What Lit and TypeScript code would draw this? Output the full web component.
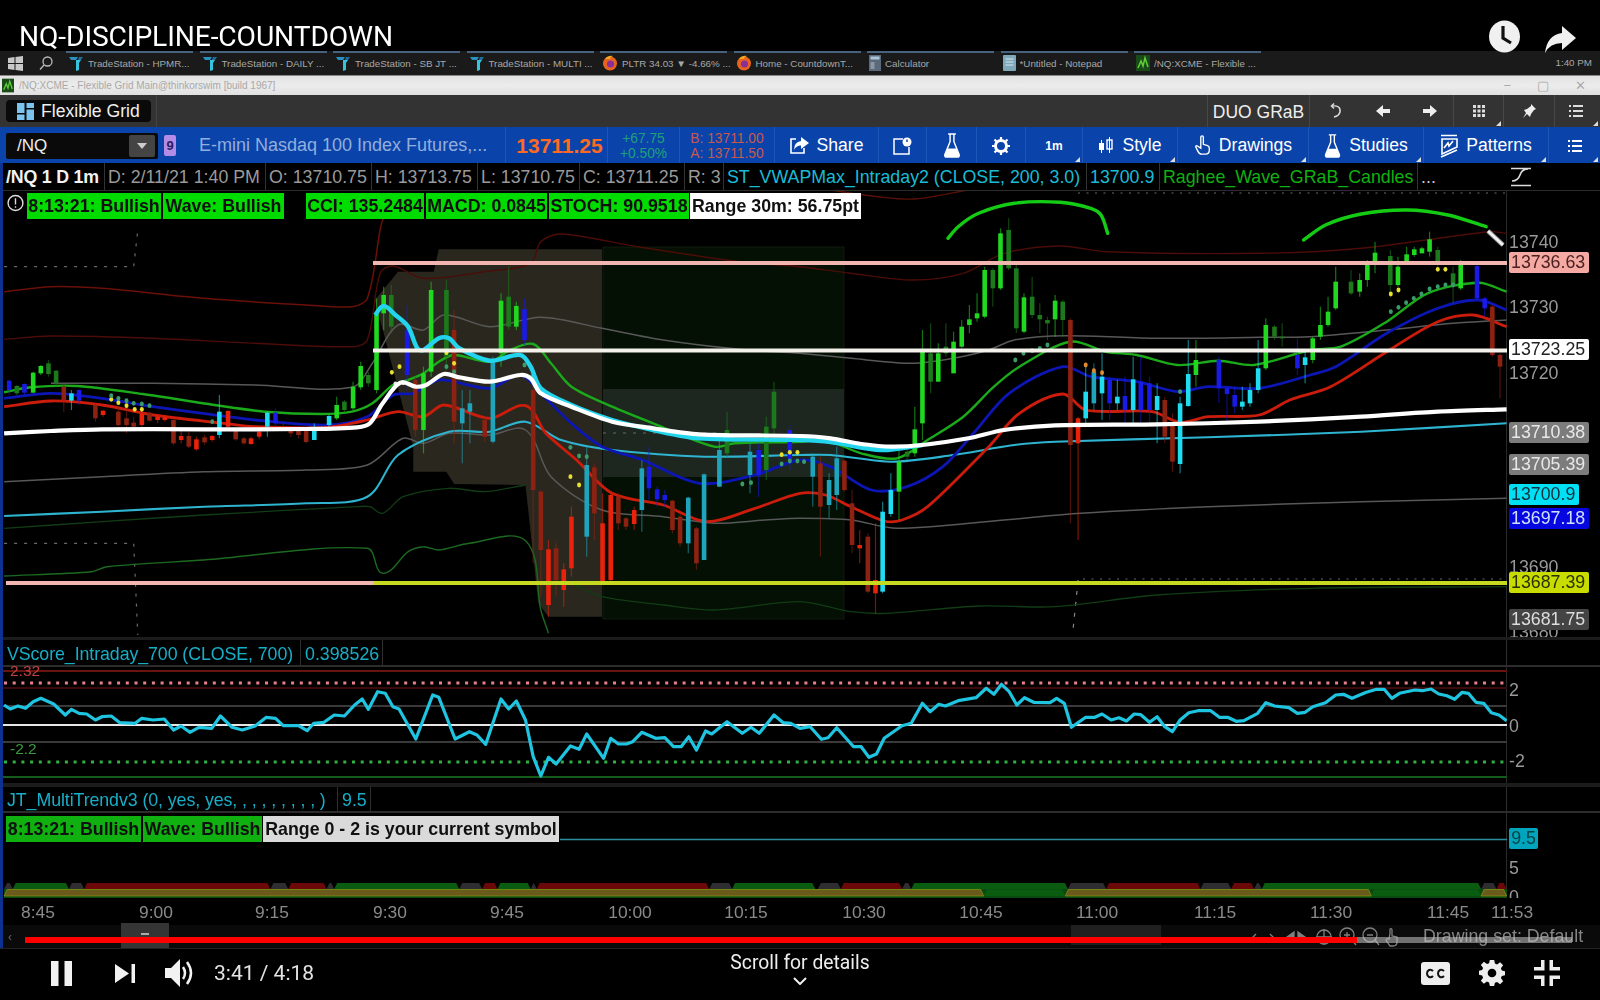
import { LitElement, html, css, svg } from "lit";
import { customElement } from "lit/decorators.js";

type Pt = [number, number];
const L = (p: Pt[]): Pt[] => p.map(([x, y]) => [x / 1.96, 230 + y / 3]);
const R = (p: Pt[]): Pt[] => p.map(([x, y]) => [800 + x / 1.96, 190 + y / 3]);
const TOP = (p: Pt[]): Pt[] => p.map(([x, y]) => [x / 1.96, y / 3]);
const V1 = (p: Pt[]): Pt[] => p.map(([x, y]) => [x / 1.96, 640 + y / 3]);
const V2 = (p: Pt[]): Pt[] => p.map(([x, y]) => [800 + x / 1.96, 640 + y / 3]);
const pts = (p: Pt[]) => p.map(([x, y]) => `${x.toFixed(1)},${y.toFixed(1)}`).join(" ");
/* Smooth curve whose tangents scale with each segment, so uneven spacing does not overshoot */
const smooth = (p: Pt[]) => {
  const tan = (i: number): Pt => {
    const a = p[Math.max(0, i - 1)], c = p[Math.min(p.length - 1, i + 1)];
    const dx = c[0] - a[0], dy = c[1] - a[1], n = Math.hypot(dx, dy) || 1;
    return [dx / n, dy / n];
  };
  let d = `M${p[0][0].toFixed(1)} ${p[0][1].toFixed(1)}`;
  for (let i = 0; i < p.length - 1; i++) {
    const b = p[i], c = p[i + 1];
    const s = Math.hypot(c[0] - b[0], c[1] - b[1]) * 0.3;
    const t1 = tan(i), t2 = tan(i + 1);
    d += `C${(b[0] + t1[0] * s).toFixed(1)} ${(b[1] + t1[1] * s).toFixed(1)} ${(c[0] - t2[0] * s).toFixed(1)} ${(c[1] - t2[1] * s).toFixed(1)} ${c[0].toFixed(1)} ${c[1].toFixed(1)}`;
  }
  return d;
};

const LINES: { c: string; w: number; p: Pt[] }[] = [
  { c: "#6a1008", w: 1.5, p: [...L([[8,185],[100,170],[200,175],[400,205],[600,225],[690,230],[720,205],[745,0]]), ...TOP([[750,660],[760,640],[790,600],[830,600]])] },
  { c: "#4c0c08", w: 1.4, p: [...L([[8,328],[100,318],[300,325],[500,340],[690,350],[720,330],[745,130],[770,108],[830,145],[950,125],[1040,100],[1060,35],[1100,12],[1250,50],[1450,95],[1568,110]]), ...R([[100,250],[220,270],[320,250],[400,190],[510,168],[600,185],[900,190],[1100,175],[1350,125],[1385,130]])] },
  { c: "#5a1008", w: 1.4, p: [[830,190],[880,197],[915,199],[968,190]] },
  { c: "#123c14", w: 1.3, p: L([[8,895],[200,875],[400,855],[700,830],[725,830],[750,850],[790,800],[880,775],[950,785],[1030,765]]) },
  { c: "#1c6a20", w: 1.4, p: L([[8,1038],[180,1025],[210,1010],[400,990],[720,955],[750,1030],[800,965],[830,950],[860,960],[920,940],[1030,932],[1060,1140],[1075,1210]]) },
  { c: "#123c14", w: 1.3, p: [...L([[1120,1060],[1180,1100],[1300,1125],[1400,1140],[1568,1115]]), ...R([[100,1265],[170,1270],[350,1248],[500,1250],[700,1215],[1000,1195],[1385,1190]])] },
  { c: "#585858", w: 1.5, p: [...L([[100,460],[300,460],[500,465],[690,472],[730,400],[780,285],[830,300],[870,255],[960,290],[1060,262],[1180,295],[1300,330],[1450,358],[1568,370]]), ...R([[100,505],[220,520],[300,505],[370,480],[420,450],[520,437],[700,445],[900,442],[1000,440],[1150,420],[1280,400],[1385,390]])] },
  { c: "#585858", w: 1.5, p: [...L([[8,755],[200,740],[400,725],[600,720],[720,705],[790,625],[830,640],[880,610],[960,615],[1030,600],[1080,740],[1180,840],[1300,860],[1400,880],[1500,870],[1568,865]]), ...R([[100,990],[190,1015],[400,990],[550,970],[800,950],[1100,935],[1385,925]])] },
  { c: "#2eb4d0", w: 2.1, p: [...L([[8,858],[200,845],[400,830],[600,820],[720,800],[780,675],[880,605],[960,605],[1030,575],[1100,630],[1200,660],[1380,680],[1568,675]]), ...R([[60,795],[180,815],[300,795],[420,765],[500,755],[800,742],[1100,725],[1385,700]])] },
  { c: "#1aaa1a", w: 2.4, p: [...L([[8,487],[60,472],[150,468],[280,492],[420,525],[520,545],[630,552],[690,545],[730,520],[770,465],[800,450],[830,430],[860,395],[890,375],[960,395],[1000,360],[1045,342],[1080,400],[1120,470],[1200,530],[1280,580],[1400,650],[1440,640],[1568,635]]), ...R([[50,750],[120,790],[190,805],[250,750],[320,680],[380,590],[430,530],[530,455],[600,485],[660,495],[740,525],[820,512],[890,525],[1000,480],[1060,470],[1150,395],[1230,310],[1330,278],[1385,305]])] },
  { c: "#0c16b4", w: 2.8, p: [...L([[8,505],[100,490],[200,505],[300,530],[500,570],[640,585],[720,560],[770,495],[810,490],[860,450],[960,475],[1020,435],[1060,490],[1120,580],[1180,650],[1260,690],[1370,760],[1480,735],[1568,690]]), ...R([[60,830],[140,900],[210,890],[280,830],[340,730],[410,610],[515,530],[570,560],[660,575],[740,605],[800,590],[900,595],[1000,555],[1050,530],[1150,430],[1250,355],[1330,330],[1385,360]])] },
  { c: "#cc1c0c", w: 2.8, p: [...L([[8,530],[100,513],[200,525],[300,555],[440,580],[500,590],[640,592],[720,570],[780,545],[830,560],[870,525],[960,565],[1030,527],[1070,610],[1130,690],[1200,790],[1300,825],[1385,875],[1480,835],[1568,790]]), ...R([[50,915],[100,950],[165,993],[200,990],[250,950],[370,770],[430,670],[515,612],[560,660],[690,665],[745,697],[800,680],[900,675],[960,630],[1040,590],[1150,485],[1250,395],[1320,375],[1385,410]])] },
];
const THICK_CYAN: Pt[] = [...L([[735,255],[752,228],[775,255],[800,290],[818,355],[830,360],[860,325],[880,325],[900,355],[960,392],[1020,375],[1040,410],[1060,475],[1120,525],[1200,570],[1280,600],[1370,625],[1568,630]]), ...R([[60,756],[160,780],[240,765]])];
const THICK_WHITE: Pt[] = [...L([[8,610],[100,603],[200,598],[400,598],[600,597],[700,592],[725,580],[750,520],[785,458],[815,470],[835,465],[870,432],[900,442],[960,455],[1020,435],[1040,445],[1060,490],[1120,530],[1200,575],[1280,595],[1370,613],[1568,618]]), ...R([[60,745],[120,762],[180,770],[240,765],[330,745],[400,720],[500,706],[700,703],[900,695],[1100,680],[1250,665],[1385,658]])];

const COL: Record<string, string> = { g: "#20d820", d: "#1c7a1c", r: "#ea220c", R: "#8e2212", b: "#1a1ae6", c: "#1fdcf0", C: "#20a4bc" };
type C = [number, number, number, number, number, string];
const CANDLES_L: C[] = [
[18,450,452,480,495,"b"],[33,465,468,490,495,"d"],[48,460,462,488,495,"b"],[65,425,428,488,490,"g"],[80,405,408,430,435,"g"],[95,390,400,432,440,"d"],[110,420,422,460,470,"d"],[125,465,470,510,545,"R"],[140,480,490,512,540,"c"],[155,478,480,512,525,"b"],[187,520,525,565,575,"R"],[202,540,542,555,560,"r"],[232,530,545,585,590,"R"],[248,540,565,585,610,"R"],[262,560,578,590,600,"R"],[278,540,552,585,590,"r"],[293,545,548,572,575,"R"],[309,555,560,570,580,"r"],[323,555,562,570,575,"r"],[340,565,570,640,645,"R"],[355,600,618,630,640,"r"],[370,605,618,650,655,"R"],[385,620,628,658,662,"r"],[401,615,622,637,645,"R"],[416,615,618,630,635,"r"],[430,495,545,615,625,"c"],[447,540,543,590,600,"r"],[462,590,600,628,632,"R"],[478,620,625,640,645,"R"],[492,620,625,642,645,"r"],[508,600,605,620,628,"r"],[524,545,548,590,620,"c"],[540,535,548,580,590,"b"],[555,580,590,598,600,"R"],[570,590,600,610,620,"R"],[585,590,600,615,625,"R"],[600,590,600,636,640,"R"],[616,580,602,630,630,"c"],[645,555,558,585,590,"c"],[660,500,525,565,570,"g"],[675,510,515,540,550,"d"],[692,455,470,535,540,"g"],[707,395,408,472,480,"g"],[722,425,435,460,470,"d"],[738,205,250,480,490,"g"],[752,170,195,250,300,"g"],[767,165,195,290,310,"d"],[798,228,300,435,480,"b"],[814,440,450,600,620,"R"],[830,410,430,600,670,"g"],[845,155,180,425,440,"g"],[875,150,180,380,420,"d"],[890,240,300,575,640,"R"],[906,480,535,580,700,"C"],[921,480,520,545,640,"C"],[950,560,570,620,635,"R"],[966,380,395,635,640,"C"],[982,190,212,370,410,"g"],[997,110,200,290,300,"d"],[1012,215,228,290,300,"g"],[1028,205,238,330,345,"b"],[1045,400,480,780,1000,"R"],[1060,780,785,960,1100,"R"],[1075,930,958,1125,1160,"r"],[1090,940,955,1050,1100,"R"],[1105,1000,1018,1080,1130,"r"],[1120,830,860,1015,1040,"r"],[1150,650,705,920,980,"C"],[1165,700,712,850,930,"R"],[1181,790,880,1060,1065,"r"],[1197,790,795,1050,1065,"r"],[1212,790,800,880,900,"R"],[1227,860,865,890,900,"R"],[1243,830,840,882,900,"r"],[1258,690,715,840,905,"C"],[1272,650,710,775,810,"b"],[1288,770,778,808,830,"b"],[1303,780,795,810,830,"b"],[1318,810,812,900,910,"R"],[1333,850,860,940,950,"R"],[1349,800,803,940,970,"C"],[1365,890,895,1000,1020,"R"],[1380,730,733,990,990,"C"],[1410,630,660,770,770,"C"],[1425,545,600,670,680,"d"],[1470,640,665,735,790,"C"],[1487,640,660,735,800,"b"],[1502,560,590,720,750,"d"],[1517,455,485,595,620,"d"],[1548,585,600,690,720,"b"]];
const CANDLES_R: C[] = [
[25,790,800,860,950,"C"],[40,800,820,950,1100,"R"],[57,850,870,945,985,"C"],[72,770,805,915,960,"C"],[87,810,812,900,905,"R"],[102,900,940,1065,1090,"R"],[117,1020,1065,1075,1120,"r"],[133,1030,1040,1205,1210,"R"],[148,1000,1170,1210,1270,"r"],[162,935,965,1205,1210,"c"],[178,850,900,972,980,"c"],[194,780,815,905,990,"g"],[210,770,785,800,810,"d"],[225,650,718,790,800,"g"],[240,420,485,700,750,"g"],[256,400,490,575,610,"d"],[271,460,490,575,575,"g"],[286,400,470,490,500,"d"],[301,425,455,550,550,"g"],[317,390,410,470,475,"g"],[332,345,388,405,430,"g"],[347,310,370,385,395,"g"],[362,230,240,380,385,"g"],[378,235,240,295,350,"d"],[393,115,130,295,300,"g"],[409,85,120,235,240,"d"],[424,220,235,415,430,"d"],[439,310,322,425,430,"g"],[455,260,320,375,385,"d"],[470,340,375,388,430,"d"],[485,380,390,400,450,"d"],[500,315,332,388,440,"g"],[515,330,335,390,440,"d"],[530,385,390,765,1000,"R"],[545,680,685,760,1050,"r"],[560,520,605,685,700,"c"],[576,520,545,640,660,"C"],[592,490,560,610,690,"c"],[607,560,570,640,690,"b"],[622,570,620,640,660,"c"],[637,560,618,660,700,"b"],[653,500,568,660,700,"c"],[668,500,575,660,700,"b"],[685,560,580,660,700,"b"],[700,580,618,660,760,"c"],[715,620,630,740,760,"R"],[730,670,700,815,845,"R"],[745,620,640,822,850,"c"],[761,450,552,648,650,"c"],[776,450,510,555,590,"g"],[821,500,510,595,640,"b"],[837,590,595,612,700,"b"],[852,590,615,650,670,"b"],[867,590,635,650,660,"c"],[882,580,600,640,650,"c"],[898,450,535,600,610,"c"],[913,385,405,535,540,"g"],[930,405,410,440,450,"d"],[945,400,440,445,470,"d"],[975,445,495,535,555,"b"],[990,480,502,525,580,"c"],[1005,440,445,510,520,"g"],[1020,350,405,440,450,"g"],[1035,320,365,405,410,"g"],[1050,230,275,355,360,"g"],[1080,240,275,310,315,"d"],[1097,250,270,305,320,"g"],[1112,210,225,270,290,"g"],[1127,155,188,215,250,"g"],[1157,180,198,285,320,"d"],[1172,200,230,285,290,"g"],[1189,170,193,215,225,"g"],[1204,170,178,195,200,"g"],[1219,170,175,190,190,"g"],[1234,125,148,185,200,"g"],[1250,170,180,220,230,"d"],[1280,230,250,285,340,"d"],[1295,210,218,295,300,"g"],[1327,225,228,325,330,"b"],[1342,320,325,355,380,"b"],[1357,345,350,495,500,"R"],[1372,490,495,530,625,"R"]];

const DOTS: [Pt[], string][] = [
  [L([[768,427],[783,410],[875,368],[890,400],[1118,740],[1135,765],[218,508],[232,518],[248,527],[264,538],[278,538],[1532,674],[1548,667],[1563,667]]), "#e8e030"],
  [L([[218,497],[232,505],[248,512],[262,520],[278,522],[293,527],[416,575],[875,410],[890,425],[1028,405],[1043,440],[1118,652],[1135,678],[1150,680],[1455,762],[1472,758],[1532,702],[1548,693],[1563,693]]), "#3a9a6a"],
  [L([[790,458],[775,462]]), "#e8e8e8"],
  [R([[8,815],[422,510],[438,490],[455,482],[470,475],[485,465],[745,605],[1158,365],[1173,352],[1188,338],[1203,325],[1218,312],[1234,297],[1250,290],[1265,285],[1280,285]]), "#3a9a6a"],
  [R([[1158,312],[1173,300],[1250,238],[1265,238]]), "#e8e030"],
  [R([[560,525],[576,542],[592,548]]), "#e08a30"],
];

const VS: Pt[] = [...V1([[8,195],[20,207],[35,198],[50,205],[65,185],[80,175],[105,192],[128,225],[140,208],[155,220],[170,222],[187,240],[200,230],[218,228],[235,248],[265,250],[278,235],[300,240],[322,237],[340,270],[355,258],[372,277],[390,262],[415,265],[432,228],[455,262],[475,270],[500,258],[522,232],[540,235],[555,257],[585,257],[602,272],[615,250],[635,247],[655,225],[675,228],[695,195],[710,177],[722,208],[740,155],[755,160],[770,200],[782,207],[815,297],[848,165],[860,172],[892,297],[920,275],[935,285],[952,313],[982,177],[997,207],[1012,183],[1030,240],[1045,350],[1060,408],[1075,352],[1090,372],[1118,318],[1135,328],[1150,282],[1183,355],[1197,295],[1212,312],[1228,312],[1240,305],[1258,277],[1285,295],[1303,293],[1320,320],[1335,320],[1350,290],[1365,330],[1383,273],[1395,282],[1425,245],[1455,280],[1472,262],[1488,280],[1517,225],[1535,248],[1550,250],[1568,265]]),
 ...V2([[20,260],[42,298],[55,293],[72,263],[105,320],[120,320],[135,352],[150,342],[165,295],[200,257],[218,250],[240,190],[255,215],[272,193],[285,198],[310,182],[345,173],[365,145],[380,163],[395,133],[410,155],[425,195],[440,173],[458,187],[490,188],[503,175],[518,190],[532,262],[560,232],[578,232],[592,222],[610,240],[625,233],[640,243],[655,222],[668,224],[685,247],[700,230],[715,260],[730,275],[745,240],[762,218],[780,212],[805,212],[822,232],[838,232],[855,244],[870,242],[897,220],[913,188],[930,198],[958,203],[975,220],[990,217],[1005,200],[1030,188],[1050,165],[1065,163],[1082,175],[1110,157],[1130,148],[1145,148],[1160,175],[1175,160],[1205,150],[1220,152],[1237,147],[1252,162],[1268,167],[1283,178],[1298,157],[1310,160],[1325,187],[1340,190],[1355,218],[1370,225],[1385,242]])];

const STRIP_TOP: [number, number, string][] = [
 [8,25,"a"],[25,135,"g"],[135,165,"a"],[165,530,"r"],[530,565,"a"],[565,640,"r"],[640,655,"a"],[655,900,"g"],[900,945,"a"],[945,975,"r"],[975,1040,"g"],[1040,1052,"a"],[1052,1390,"r"],[1390,1435,"a"],[1435,1598,"g"],
 [1603,1648,"a"],[1648,1768,"r"],[1768,1786,"a"],[1786,2093,"g"],[2093,2168,"a"],[2168,2353,"r"],[2353,2413,"a"],[2413,2458,"r"],[2458,2473,"a"],[2473,2903,"g"],[2903,2933,"a"],[2933,2953,"r"]];
const STRIP_BOT: [number, number, string][] = [[8,1928,"o"],[1928,2088,"g"],[2088,2688,"o"],[2688,2903,"g"],[2903,2953,"o"]];
const STRIP_COL: Record<string, string> = { a: "#2e2e30", g: "#0a5c10", r: "#6c0808", o: "#6a5a1c" };

const TICKS: [string, number][] = [["8:45",38],["9:00",156],["9:15",272],["9:30",390],["9:45",507],["10:00",630],["10:15",746],["10:30",864],["10:45",981],["11:00",1097],["11:15",1215],["11:30",1331],["11:45",1448],["11:53",1512]];

const PLAIN: [string, number][] = [["13740",51],["13730",116],["13720",182],["13690",376],["13680",441]];
const TAGS: [string, number, number, string][] = [
  ["13736.63",61,80,"pink"],["13723.25",148,80,"white"],["13710.38",231,80,"gray"],["13705.39",263,80,"gray"],["13700.9",293,70,"cyan"],["13697.18",317,80,"blue-t"],["13687.39",381,80,"yel"],["13681.75",418,80,"dark"],
];

const TASKS: [string, string][] = [
  ["ts","TradeStation - HPMR..."],["ts","TradeStation - DAILY ..."],["ts","TradeStation - SB JT ..."],["ts","TradeStation - MULTI ..."],["ff","PLTR 34.03 ▼ -4.66% ..."],["ff","Home - CountdownT..."],["calc","Calculator"],["note","*Untitled - Notepad"],["tos","/NQ:XCME - Flexible ..."],
];

const corner = svg`<path d="M0 5 L5 5 L5 0 Z" fill="#ddd"/>`;
const cn = html`<svg class="corner" viewBox="0 0 5 5">${corner}</svg>`;

function flask(w = 18, h = 26) {
  return html`<svg width=${w} height=${h} viewBox="0 0 18 26"><path d="M5 1h8M7 1v8L1.500 22.500Q1 25 3.500 25h11q2.500 0 2-2.500L11 9V1" fill="none" stroke="#fff" stroke-width="1.500"/><path d="M4.500 16h9l3 7q0 2-2 2h-11q-2 0-2-2Z" fill="#fff"/></svg>`;
}
function listIcon(c = "#fff") {
  return html`<svg width="14" height="14" viewBox="0 0 14 14" fill=${c}><rect x="0" y="1" width="2" height="2"/><rect x="4" y="1" width="10" height="2"/><rect x="0" y="6" width="2" height="2"/><rect x="4" y="6" width="10" height="2"/><rect x="0" y="11" width="2" height="2"/><rect x="4" y="11" width="10" height="2"/></svg>`;
}
function hand(c = "#fff", s = 20) {
  return html`<svg width=${s} height=${s * 1.2} viewBox="0 0 20 24"><path d="M8 2.500a1.500 1.500 0 0 1 3 0V11l5 1.500q2 .8 2 3V18q0 4.500-4.500 4.500H9Q6 22.500 4.500 19L2 14q0-2 2-1l4 2.500Z" fill="none" stroke=${c} stroke-width="1.600"/></svg>`;
}
function taskIcon(k: string) {
  if (k === "ts") return html`<svg width="16" height="16" viewBox="0 0 16 16"><path d="M1 2h9l-2 3H3Z" fill="#2b8fc0"/><path d="M8 5h5l-2 3v7l-3 1Z" fill="#35c4e0"/><path d="M11 2h4l-2 3h-3Z" fill="#1f6e9c"/></svg>`;
  if (k === "ff") return html`<svg width="16" height="16" viewBox="0 0 16 16"><circle cx="8" cy="8.500" r="7" fill="#e8641e"/><circle cx="8.500" cy="9" r="3.600" fill="#8a2f9a"/><path d="M3 4q3-4 8-3-3 1-3 3Z" fill="#f5a623"/></svg>`;
  if (k === "calc") return html`<svg width="12" height="16" viewBox="0 0 12 16"><rect width="12" height="16" fill="#5a6a7a"/><rect x="1.500" y="1.500" width="9" height="3" fill="#a9c4d8"/><rect x="1.500" y="7" width="4" height="7" fill="#8a98a6"/></svg>`;
  if (k === "note") return html`<svg width="13" height="16" viewBox="0 0 13 16"><rect width="13" height="16" rx="1" fill="#7fa8b8"/><path d="M2.500 4h8M2.500 7h8M2.500 10h8" stroke="#d8e6ee"/></svg>`;
  return html`<svg width="14" height="16" viewBox="0 0 14 16"><rect width="14" height="16" fill="#1a4a18"/><path d="M2 13L5 6l2 5 2-8 3 9" fill="none" stroke="#5fd038" stroke-width="1.500"/></svg>`;
}

@customElement("app-root")
export class AppRoot extends LitElement {
  static styles = css`
    :host { display: block; width: 1600px; height: 1000px; overflow: hidden; background: #000; font-family: "Liberation Sans", Arial, sans-serif; position: relative; }
    .page { display: flex; flex-direction: column; height: 1000px; filter: blur(0.55px); position: relative; }
    svg { display: block; flex: none; }
    .title { height: 51px; flex: none; display: flex; align-items: flex-end; padding: 0 24px 0 19px; gap: 24px; position: relative; z-index: 2; }
    .title h1 { margin: 0 auto 0 0; font: 400 28.200px/30px Roboto, sans-serif; color: #fff; letter-spacing: -.1px; position: relative; top: 1px; }
    .title .ic { margin-bottom: -2px; }
    .task { height: 24px; flex: none; background: #1a1a1a; display: flex; align-items: center; position: relative; color: #a8a8a8; font-size: 9.800px; }
    .task .sys { width: 66px; display: flex; align-items: center; gap: 16px; padding-left: 8px; box-sizing: border-box; }
    .titem { width: 127px; margin-right: 6.500px; height: 24px; display: flex; align-items: center; gap: 4px; border-top: 2px solid #46627c; box-sizing: border-box; white-space: nowrap; padding-left: 2px; padding-bottom: 2px; }
    .clock { position: absolute; right: 8px; top: 6px; font-size: 9.800px; }
    .win { height: 20px; flex: none; background: linear-gradient(#e2e2e2, #ececec 50%, #e0e0e0); border-top: 1px solid #888; box-sizing: border-box; display: flex; align-items: center; color: #a8a8a8; font-size: 10px; padding-left: 2px; gap: 5px; }
    .win .ctl { margin-left: auto; display: flex; align-items: center; gap: 26px; padding-right: 14px; color: #aaa; font-size: 13px; }
    .tool { height: 32px; flex: none; background: #333; display: flex; color: #eee; box-sizing: border-box; }
    .tool .fg { width: 157px; border-right: 1px solid #444; box-sizing: border-box; padding: 5px 0 0 6px; }
    .fgbtn { width: 145px; height: 22px; background: #0a0a0a; border-radius: 4px; display: flex; align-items: center; gap: 7px; padding-left: 11px; box-sizing: border-box; font-size: 17.600px; color: #f0f0f0; }
    .tool .sp { flex: 1; }
    .tc { position: relative; border-left: 1px solid #474747; box-sizing: border-box; display: flex; align-items: center; justify-content: space-around; }
    .tc.duo { width: 102px; font-size: 17.500px; justify-content: center; padding-top: 2px; }
    .tc.nav { width: 144px; padding-left: 2px; }
    .tc.i1 { width: 50px; } .tc.i2 { width: 51px; } .tc.i3 { width: 46px; padding-right: 3px; }
    .corner { position: absolute; right: 2px; bottom: 1px; width: 5px; height: 5px; }
    .blue { height: 36px; flex: none; background: #0a43a9; display: grid; grid-template-columns: 190px 316px 102px 72px 95px 104px 48px 50px 49px 57px 95px 131px 115px 125px 51px; color: #fff; font-size: 17.600px; }
    .blue > div { border-right: 1px solid #1f55b6; box-sizing: border-box; display: flex; align-items: center; position: relative; justify-content: center; padding-top: 1px; }
    .blue > div.nb { border: 0; }
    .blue > div.last { padding-left: 6px; }
    .combo { justify-content: flex-start !important; padding-left: 6px; gap: 6px; }
    .cbox { width: 152px; height: 26px; background: #0a0a0a; border-radius: 2px; display: flex; align-items: center; justify-content: space-between; padding: 0 3px 0 11px; box-sizing: border-box; font-size: 17px; color: #eee; }
    .cbtn { width: 26px; height: 22px; background: #444; display: flex; align-items: center; justify-content: center; border-radius: 2px; }
    .nine { width: 12px; height: 21px; background: #b48ce6; color: #2a2060; font-size: 13px; font-weight: 700; display: flex; align-items: center; justify-content: center; border-radius: 2px; position: relative; }
    .nm { color: #92aedc; font-size: 18px; justify-content: flex-start !important; padding-left: 9px; white-space: nowrap; }
    .last { color: #ff6a22; font-size: 21px; font-weight: 700; }
    .two { flex-direction: column; font-size: 13.800px; line-height: 15px; align-items: center; }
    .chg { color: #1fa078; }
    .ba { color: #c85a4c; }
    .lbl { gap: 8px; }
    .tf { font-size: 12px; font-weight: 700; }
    .info { height: 28px; flex: none; display: grid; grid-template-columns: 105px 161px 106px 106px 102px 105px 39px 363px 73px 258px 21px 68px 93px; font-size: 17.800px; color: #9a9a9a; border-bottom: 1px solid #2c2c2c; box-sizing: border-box; background: #000; }
    .info > div { border-right: 1px solid #333; box-sizing: border-box; display: flex; align-items: center; padding: 1px 0 0 3px; white-space: nowrap; }
    .info .me { color: #f2f2f2; font-weight: 700; font-size: 17.800px; padding-left: 6px; letter-spacing: -.2px; }
    .info .nob { border: 0; }
    .info .dots { color: #ccc; }
    .teal { color: #18bcd8; } .grn { color: #10b010; }
    .row { display: grid; grid-template-columns: 1507px 93px; flex: none; position: relative; }
    .plot { position: relative; border-right: 1px solid #2a2a2a; box-sizing: border-box; }
    .axis { position: relative; overflow: hidden; color: #999; font-size: 17.800px; }
    .plain { position: absolute; left: 2px; transform: translateY(-50%); line-height: 20px; }
    .tag { position: absolute; left: 2px; height: 21px; line-height: 21px; padding-left: 2px; box-sizing: border-box; border-radius: 2px; color: #222; white-space: nowrap; }
    .pink { background: #f4a9a2; color: #4a2020; } .white { background: #fff; color: #222; } .gray { background: #7c7c7c; color: #e8e8e8; } .cyan { background: #00e0f4; color: #103040; } .blue-t { background: #0606e0; color: #cfe0ff; } .yel { background: #c8dc00; color: #2a3000; } .dark { background: #444; color: #ddd; }
    .chart { height: 446px; } .plot > svg { position: absolute; left: 0; top: 0; }
    .ov { position: absolute; left: 0; top: 2px; right: 0; display: flex; align-items: center; padding-left: 27px; gap: 2px; font-size: 17.800px; font-weight: 700; color: #101010; height: 26px; }
    .ov span { height: 26px; line-height: 27px; box-sizing: border-box; white-space: nowrap; text-align: center; }
    .ov .gb { background: #00dc00; }
    .ov .w1 { width: 134px; } .ov .w2 { width: 121px; margin-right: 20px; } .ov .w3 { width: 118px; } .ov .w4 { width: 121px; } .ov .w5 { width: 140px; } .ov .w6 { width: 171px; background: #fff; margin-left: -1px; }
    .plot > svg.excl { left: 7px; top: 3px; width: 17px; height: 18px; }
    .gap { flex: none; background: #1c1c1c; }
    .g3 { height: 3px; } .g4 { height: 4px; }
    .leg { height: 27px; flex: none; display: grid; grid-template-columns: 301px 82px 1124px 93px; font-size: 17.800px; border-bottom: 2px solid #2c2c2c; box-sizing: border-box; }
    .leg.jt { height: 26px; grid-template-columns: 338px 33px 1136px 93px; }
    .leg > div { border-right: 1px solid #2e2e2e; padding: 3px 0 0 4px; display: flex; align-items: center; white-space: nowrap; box-sizing: border-box; color: #18aec8; }
    .leg > div:first-child { padding-left: 7px; letter-spacing: -.08px; }
    .leg > div.nb { border: 0; }
    .vs { height: 116px; } .jtp { height: 85px; }
    .note { position: absolute; left: 10px; font-size: 15.500px; line-height: 16px; }
    .note.red { top: -4px; color: #c04040; } .note.gr { top: 74px; color: #3a9a40; }
    .bs { position: absolute; left: 6px; top: 3px; display: flex; font-size: 17.800px; font-weight: 700; color: #101010; height: 26px; gap: 2px; }
    .bs span { height: 26px; line-height: 27px; text-align: center; white-space: nowrap; box-sizing: border-box; }
    .bs .a { width: 135px; background: #10b010; } .bs .b { width: 119px; background: #10b010; } .bs .c { width: 296px; background: #dadada; margin-left: -1px; }
    .t95 { position: absolute; left: 2px; top: 15px; width: 29px; height: 21px; line-height: 21px; background: #00a4bc; color: #044; text-align: center; border-radius: 2px; }
    .time { height: 27px; flex: none; position: relative; color: #8a8a8a; font-size: 17.400px; }
    .time span { position: absolute; top: 4px; transform: translateX(-50%); }
    .scroll { height: 23px; flex: none; background: #0a0a0a; position: relative; color: #858585; font-size: 17.800px; }
    .h1 { position: absolute; left: 121px; top: -2px; width: 48px; height: 25px; background: #353535; display: flex; align-items: center; justify-content: center; }
    .h2 { position: absolute; left: 1071px; top: 0; width: 90px; height: 20px; background: #202020; }
    .ds { position: absolute; left: 1423px; top: 1px; white-space: nowrap; }
    .sic { position: absolute; left: 1250px; top: 2px; }
    .cleft { position: absolute; left: 8px; top: 5px; color: #666; font-size: 12px; }
    .prog { position: absolute; left: 25px; top: 12px; width: 1332px; height: 6px; background: #f00; }
    .buf { position: absolute; left: 1357px; top: 12px; width: 215px; height: 6px; background: rgba(200,200,200,.55); }
    .player { height: 52px; flex: none; background: #000; border-top: 1px solid #222; box-sizing: border-box; position: relative; display: flex; align-items: center; color: #eee; }
    .ctrl { display: flex; align-items: center; padding-left: 51px; height: 100%; padding-bottom: 3px; box-sizing: border-box; }
    .ctrl .nx { margin-left: 43px; } .ctrl .vol { margin-left: 30px; }
    .tm { font: 400 21px Roboto, sans-serif; margin-left: 20px; color: #e4e4e4; }
    .mid { position: absolute; left: 0; right: 0; top: 1px; text-align: center; font: 400 19.300px/26px Roboto, sans-serif; color: #eee; }
    .mid svg { margin: 1px auto 0; }
    .rt { margin-left: auto; display: flex; align-items: center; gap: 29px; padding: 0 40px 3px 0; }
    .hl { position: absolute; left: 0; top: 163px; width: 3px; height: 785px; background: #0c3190; z-index: 3; }
  `;

  private candle(c: C, map: (p: Pt[]) => Pt[]) {
    const [[x, wt], [, bt], [, bb], [, wb]] = map([[c[0], c[1]], [c[0], c[2]], [c[0], c[3]], [c[0], c[4]]]);
    const col = COL[c[5]];
    return svg`<line x1=${x} x2=${x} y1=${wt} y2=${wb} stroke=${col} stroke-width="1.200" opacity=".55"/><rect x=${x - 2.3} y=${bt} width="4.600" height=${Math.max(1, bb - bt)} fill=${col}/>`;
  }

  private chartSvg() {
    return html`<svg width="1507" height="446" viewBox="0 191 1507 446">
      <polygon points=${pts(L([[860,58],[1180,58],[1180,1160],[1075,1160],[1055,1120],[1030,765],[890,762],[875,725],[810,725],[810,650],[735,210],[780,125],[850,125]]))} fill="#2a281e"/>
      <rect x="603" y="247" width="241" height="372" fill="#031003" stroke="#1a2a1a" stroke-width=".6"/>
      <rect x="603" y="389" width="241" height="88" fill="#1d271f"/>
      <polyline points=${pts(L([[8,110],[262,110],[270,0]]))} fill="none" stroke="#6a6a6a" stroke-width="1.200" stroke-dasharray="3 7"/>
      <polyline points=${pts(L([[8,940],[262,940],[270,1215]]))} fill="none" stroke="#6a6a6a" stroke-width="1.200" stroke-dasharray="3 7"/>
      <line x1="603" x2="720" y1="433" y2="433" stroke="#6a6a6a" stroke-dasharray="3 7"/>
      <line x1="1078" x2="1507" y1="193" y2="193" stroke="#6a6a6a" stroke-width="1.200" stroke-dasharray="2 6.500"/>
      <line x1="1083" x2="1507" y1="579" y2="579" stroke="#6a6a6a" stroke-width="1.200" stroke-dasharray="2 6.500"/>
      <polyline points=${pts(R([[545,1170],[535,1320]]))} fill="none" stroke="#888" stroke-width="1.200" stroke-dasharray="4 7"/>
      ${LINES.map((l) => svg`<path d=${smooth(l.p)} fill="none" stroke=${l.c} stroke-width=${l.w} stroke-linejoin="round"/>`)}
      ${CANDLES_L.map((c) => this.candle(c, L))}
      ${CANDLES_R.map((c) => this.candle(c, R))}
      ${DOTS.map(([p, c]) => p.map(([x, y]) => svg`<ellipse cx=${x} cy=${y} rx="2" ry="2.400" fill=${c}/>`))}
      <path d=${smooth(THICK_CYAN)} fill="none" stroke="#22d4ec" stroke-width="4.400" stroke-linejoin="round"/>
      <path d=${smooth(THICK_WHITE)} fill="none" stroke="#fff" stroke-width="4.200" stroke-linejoin="round"/>
      <line x1="373" x2="1507" y1="263" y2="263" stroke="#f2b6b0" stroke-width="3.800"/>
      <line x1="373" x2="1507" y1="350.500" y2="350.500" stroke="#f4f0ea" stroke-width="3.800"/>
      <line x1="6" x2="373" y1="583" y2="583" stroke="#f2b6b0" stroke-width="3.800"/>
      <line x1="373" x2="1507" y1="583" y2="583" stroke="#c6d820" stroke-width="3.800"/>
      <path d=${smooth(R([[290,145],[310,110],[350,70],[420,40],[510,37],[570,55],[590,75],[603,130]]))} fill="none" stroke="#14cc14" stroke-width="3.400" stroke-linecap="round"/>
      <path d=${smooth(R([[987,150],[1030,105],[1100,72],[1190,60],[1270,75],[1345,110]]))} fill="none" stroke="#14cc14" stroke-width="3.400" stroke-linecap="round"/>
      <line x1="1488" y1="231" x2="1503" y2="245" stroke="#999" stroke-width="4.500"/>
      <line x1="1488" y1="231" x2="1503" y2="245" stroke="#f4f4f4" stroke-width="2.500"/>
    </svg>`;
  }

  private vsSvg() {
    return html`<svg width="1507" height="116" viewBox="0 667 1507 116">
      <line x1="3" x2="1507" y1="671" y2="671" stroke="#6a1410" stroke-width="2"/>
      <line x1="4" x2="1507" y1="683" y2="683" stroke="#e8808c" stroke-width="3" stroke-dasharray="3 5.700"/>
      <line x1="3" x2="1507" y1="688" y2="688" stroke="#3c0a0a" stroke-width="2"/>
      <line x1="3" x2="1507" y1="706" y2="706" stroke="#3a3a3a" stroke-width="2"/>
      <line x1="3" x2="1507" y1="725" y2="725" stroke="#e6e6e6" stroke-width="2"/>
      <line x1="3" x2="1507" y1="742" y2="742" stroke="#3a3a3a" stroke-width="2"/>
      <line x1="4" x2="1507" y1="762" y2="762" stroke="#30b040" stroke-width="3" stroke-dasharray="3 5.700"/>
      <line x1="3" x2="1507" y1="777" y2="777" stroke="#145a18" stroke-width="2"/>
      <polyline points=${pts(VS)} fill="none" stroke="#1ec4e0" stroke-width="3.200" stroke-linejoin="round"/>
    </svg>`;
  }

  private stripSvg() {
    const conv = (x: number) => x / 1.96;
    const seg = (a: number, b: number, k: string, y1: number, y2: number) => {
      const x1 = conv(a), x2 = conv(b);
      const c = 3;
      return svg`<polygon points="${x1},${y2} ${x1 + c},${y1} ${x2 - c},${y1} ${x2},${y2}" fill=${STRIP_COL[k]} stroke=${k === "o" ? "#8a9a10" : "none"} stroke-width=".7"/>`;
    };
    return html`<svg width="1507" height="85" viewBox="0 813 1507 85">
      <line x1="560" x2="1507" y1="839.500" y2="839.500" stroke="#2a8ea0" stroke-width="1.400"/>
      <rect x="4" y="889" width="1503" height="9" fill="#0a4a10"/>
      ${STRIP_TOP.map(([a, b, k]) => seg(a, b, k, 883, 889))}
      ${STRIP_BOT.map(([a, b, k]) => seg(a, b, k, 889.500, 896))}
    </svg>`;
  }

  render() {
    return html`<div class="page">
      <div class="title">
        <h1>NQ-DISCIPLINE-COUNTDOWN</h1>
        <svg class="ic" width="31" height="33" viewBox="0 0 31 33"><ellipse cx="15.500" cy="16.500" rx="15.500" ry="16" fill="#f0f0f0"/><path d="M14 6v12l8 5" fill="none" stroke="#111" stroke-width="3.200"/></svg>
        <svg class="ic" width="32" height="27" viewBox="0 0 32 27"><path d="M18 0l14 12-14 12v-7Q6 17 1 27 3 9 18 7Z" fill="#f0f0f0"/></svg>
      </div>
      <div class="task">
        <div class="sys">
          <svg width="15" height="15" viewBox="0 0 15 15" fill="#c8c8c8"><path d="M0 2l6.500-1v6H0ZM7.500 1L15 0v7H7.500ZM0 8h6.500v6L0 13ZM7.500 8H15v7l-7.500-1Z"/></svg>
          <svg width="14" height="14" viewBox="0 0 14 14" fill="none" stroke="#bbb" stroke-width="1.300"><circle cx="8.500" cy="5.500" r="4.500"/><path d="M5 9l-4 4.500"/></svg>
        </div>
        ${TASKS.map(([k, t]) => html`<div class="titem">${taskIcon(k)}<span>${t}</span></div>`)}
        <div class="clock">1:40 PM</div>
      </div>
      <div class="win">
        <svg width="12" height="15" viewBox="0 0 14 16"><rect width="14" height="16" fill="#1a4a18"/><path d="M2 13L5 6l2 5 2-8 3 9" fill="none" stroke="#5fd038" stroke-width="1.500"/></svg>
        <span>/NQ:XCME - Flexible Grid Main@thinkorswim [build 1967]</span>
        <div class="ctl"><span>−</span><span>▢</span><span>✕</span></div>
      </div>
      <div class="tool">
        <div class="fg"><div class="fgbtn">
          <svg width="17" height="17" viewBox="0 0 17 17" fill="#7ac4ee"><rect width="7.500" height="10"/><rect y="11.500" width="7.500" height="5.500"/><rect x="9.500" width="7.500" height="5"/><rect x="9.500" y="6.500" width="7.500" height="10.500"/></svg>
          <span>Flexible Grid</span>
        </div></div>
        <div class="sp"></div>
        <div class="tc duo">DUO GRaB</div>
        <div class="tc nav">
          <svg width="14" height="16" viewBox="0 0 14 16" fill="none" stroke="#ddd" stroke-width="1.500"><path d="M3 3q9-1 8 6-1 4-6 5"/><path d="M5 0.500L2.500 3 5 5.500"/></svg>
          <svg width="14" height="12" viewBox="0 0 14 12" fill="#eee"><path d="M7 0v4h7v4H7v4L0 6Z"/></svg>
          <svg width="14" height="12" viewBox="0 0 14 12" fill="#eee"><path d="M7 0v4H0v4h7v4l7-6Z"/></svg>
        </div>
        <div class="tc i1"><svg width="12" height="12" viewBox="0 0 12 12" fill="#ddd"><rect width="3" height="3"/><rect x="4.500" width="3" height="3"/><rect x="9" width="3" height="3"/><rect y="4.500" width="3" height="3"/><rect x="4.500" y="4.500" width="3" height="3"/><rect x="9" y="4.500" width="3" height="3"/><rect y="9" width="3" height="3"/><rect x="4.500" y="9" width="3" height="3"/><rect x="9" y="9" width="3" height="3"/></svg>${cn}</div>
        <div class="tc i2"><svg width="13" height="14" viewBox="0 0 13 14" fill="#eee"><path d="M8 0l5 5-2 1-3 4-1 3-3-3-4 4 3-5-2-3 3-1 4-3Z"/></svg></div>
        <div class="tc i3">${listIcon("#ddd")}${cn}</div>
      </div>
      <div class="blue">
        <div class="combo nb">
          <div class="cbox"><span>/NQ</span><div class="cbtn"><svg width="10" height="6" viewBox="0 0 10 6" fill="#ccc"><path d="M0 0h10L5 6Z"/></svg></div></div>
          <div class="nine">9</div>
        </div>
        <div class="nm">E-mini Nasdaq 100 Index Futures,...</div>
        <div class="last">13711.25</div>
        <div class="two chg"><span>+67.75</span><span>+0.50%</span></div>
        <div class="two ba"><span>B: 13711.00</span><span>A: 13711.50</span></div>
        <div class="lbl"><svg width="19" height="17" viewBox="0 0 19 17" fill="none" stroke="#fff" stroke-width="1.600"><path d="M6 2H1v14h13v-5"/><path d="M11 0l8 6-8 6V8.500Q6 8.500 4 13 4 5 11 4Z" fill="#fff" stroke="none"/></svg><span>Share</span></div>
        <div><svg width="19" height="18" viewBox="0 0 19 18" fill="none" stroke="#fff" stroke-width="1.500"><path d="M10 2H1v15h15V10"/><circle cx="14" cy="5" r="4.500" fill="#fff" stroke="none"/><path d="M14 2.500V5" stroke="#0a43a9"/></svg></div>
        <div>${flask(18, 25)}</div>
        <div><svg width="18" height="18" viewBox="0 0 18 18"><circle cx="9" cy="9" r="5.500" fill="none" stroke="#fff" stroke-width="3"/><path d="M9 0v4M9 14v4M0 9h4M14 9h4M2.500 2.500l3 3M12.500 12.500l3 3M15.500 2.500l-3 3M5.500 12.500l-3 3" stroke="#fff" stroke-width="2.200"/></svg></div>
        <div class="tf">1m${cn}</div>
        <div class="lbl"><svg width="16" height="18" viewBox="0 0 16 18" fill="#fff"><rect x="1" y="6" width="5" height="7"/><rect x="3" y="3" width="1" height="13"/><rect x="9" y="3" width="5" height="9" fill="none" stroke="#fff" stroke-width="1.400"/><rect x="11" y="0" width="1" height="16"/></svg><span>Style</span>${cn}</div>
        <div class="lbl">${hand("#fff", 17)}<span>Drawings</span>${cn}</div>
        <div class="lbl">${flask(17, 24)}<span>Studies</span>${cn}</div>
        <div class="lbl"><svg width="18" height="24" viewBox="0 0 18 24" fill="none" stroke="#fff" stroke-width="1.600"><path d="M1 1.500h16M2 5h15v8L2 20ZM1 23l16-7"/><path d="M4 14l4-5 1 3 4-5"/></svg><span>Patterns</span>${cn}</div>
        <div class="nb">${listIcon()}${cn}</div>
      </div>
      <div class="info">
        <div class="me">/NQ 1 D 1m</div><div>D: 2/11/21 1:40 PM</div><div>O: 13710.75</div><div>H: 13713.75</div><div>L: 13710.75</div><div>C: 13711.25</div><div>R: 3</div>
        <div class="teal">ST_VWAPMax_Intraday2 (CLOSE, 200, 3.0)</div><div class="teal">13700.9</div><div class="grn">Raghee_Wave_GRaB_Candles</div><div class="nob dots">...</div><div class="nob"></div>
        <div class="nob"><svg width="22" height="20" viewBox="0 0 22 20" fill="none" stroke="#ddd" stroke-width="1.600"><path d="M1 1.500h20M1 18.500h20M2 14q6 0 8-6t8-6" /></svg></div>
      </div>
      <div class="row chart">
        <div class="plot">
          ${this.chartSvg()}
          <svg class="excl" viewBox="0 0 16 16" fill="none" stroke="#ddd" stroke-width="1.300"><circle cx="8" cy="8" r="7"/><path d="M8 3.500v6M8 11v1.500"/></svg>
          <div class="ov">
            <span class="gb w1">8:13:21: Bullish</span><span class="gb w2">Wave: Bullish</span><span class="gb w3">CCI: 135.2484</span><span class="gb w4">MACD: 0.0845</span><span class="gb w5">STOCH: 90.9518</span><span class="w6">Range 30m: 56.75pt</span>
          </div>
        </div>
        <div class="axis">
          ${PLAIN.map(([t, y]) => html`<div class="plain" style="top:${y}px">${t}</div>`)}
          ${TAGS.map(([t, y, w, k]) => html`<div class="tag ${k}" style="top:${y}px;width:${w}px">${t}</div>`)}
        </div>
      </div>
      <div class="gap g3"></div>
      <div class="leg"><div>VScore_Intraday_700 (CLOSE, 700)</div><div>0.398526</div><div></div><div class="nb"></div></div>
      <div class="row vs">
        <div class="plot">${this.vsSvg()}<div class="note red">2.32</div><div class="note gr">-2.2</div></div>
        <div class="axis"><div class="plain" style="top:23px">2</div><div class="plain" style="top:59px">0</div><div class="plain" style="top:94px">-2</div></div>
      </div>
      <div class="gap g4"></div>
      <div class="leg jt"><div>JT_MultiTrendv3 (0, yes, yes, , , , , , , , , )</div><div>9.5</div><div></div><div class="nb"></div></div>
      <div class="row jtp">
        <div class="plot">${this.stripSvg()}
          <div class="bs"><span class="a">8:13:21: Bullish</span><span class="b">Wave: Bullish</span><span class="c">Range 0 - 2 is your current symbol</span></div>
        </div>
        <div class="axis"><div class="t95">9.5</div><div class="plain" style="top:55px">5</div><div class="plain" style="top:84px">0</div></div>
      </div>
      <div class="time">${TICKS.map(([t, x]) => html`<span style="left:${x}px">${t}</span>`)}</div>
      <div class="scroll">
        <div class="cleft">‹</div>
        <div class="h1"><svg width="8" height="6" viewBox="0 0 8 6" fill="#aaa"><rect width="8" height="2"/><rect y="4" width="8" height="2"/></svg></div>
        <div class="h2"></div>
        <div class="sic">
          <svg width="150" height="20" viewBox="0 0 150 20" fill="none" stroke="#808080" stroke-width="1.300">
            <path d="M6 7l-3 3 3 3M20 7l3 3-3 3"/>
            <path d="M44 5l-7 5 7 5ZM48 5l7 5-7 5Z" fill="#808080"/>
            <circle cx="74" cy="10" r="7"/><path d="M74 2v16M66 10h16"/>
            <circle cx="97" cy="8" r="7"/><path d="M94 8h6M97 5v6M102 13l4 5"/>
            <circle cx="120" cy="8" r="7"/><path d="M117 8h6M125 13l4 5"/>
            <path d="M140 6V2q2-1 2 1v6l5 1v5q0 4-4 4h-3l-4-6q1-2 3-1Z"/>
          </svg>
        </div>
        <div class="ds">Drawing set: Default</div>
        <div class="buf"></div>
        <div class="prog"></div>
      </div>
      <div class="player">
        <div class="ctrl">
          <svg width="21" height="25" viewBox="0 0 21 25" fill="#f2f2f2"><rect width="7.500" height="25"/><rect x="13.500" width="7.500" height="25"/></svg>
          <svg class="nx" width="20" height="19" viewBox="0 0 20 19" fill="#f2f2f2"><path d="M0 0l14 9.500L0 19Z"/><rect x="16.500" width="3.500" height="19"/></svg>
          <svg class="vol" width="29" height="28" viewBox="0 0 29 28" fill="#f2f2f2"><path d="M0 9h6l9-9v28l-9-9H0Z"/><path d="M18 8q4 6 0 12" fill="none" stroke="#f2f2f2" stroke-width="2.500"/><path d="M22 3q8 11 0 22" fill="none" stroke="#f2f2f2" stroke-width="2.500"/></svg>
          <span class="tm">3:41 / 4:18</span>
        </div>
        <div class="mid">Scroll for details<svg width="14" height="8" viewBox="0 0 14 8" fill="none" stroke="#eee" stroke-width="2"><path d="M1 1l6 6 6-6"/></svg></div>
        <div class="rt">
          <svg width="29" height="23" viewBox="0 0 29 23"><rect width="29" height="23" rx="3" fill="#eee"/><path d="M12 9q-2-2-4-1-2 1-2 3.500t2 3.500q2 1 4-1M23 9q-2-2-4-1-2 1-2 3.500t2 3.500q2 1 4-1" fill="none" stroke="#111" stroke-width="2"/></svg>
          <svg width="26" height="26" viewBox="0 0 24 24" fill="#eee"><path fill-rule="evenodd" d="M10 0h4l.7 3.200 2 .9L19.500 2l2.800 2.800-2.100 2.800.9 2L24 10.300v3.700l-2.900.7-.9 2 2.100 2.800-2.800 2.800-2.800-2.100-2 .9L14 24h-4l-.7-3.200-2-.9L4.500 22l-2.800-2.800 2.100-2.800-.9-2L0 13.700V10l2.900-.7.900-2-2.100-2.800L4.500 1.700l2.800 2.100 2-.9ZM12 8a4 4 0 1 0 0 8 4 4 0 0 0 0-8Z"/></svg>
          <svg width="26" height="26" viewBox="0 0 26 26" fill="#eee"><path d="M7 0h3.500v10.500H0V7h7ZM15.500 0H19v7h7v3.500H15.500ZM0 15.500h10.500V26H7v-7H0ZM15.500 15.500H26V19h-7v7h-3.500Z"/></svg>
        </div>
      </div>
      <div class="hl"></div>
    </div>`;
  }
}
